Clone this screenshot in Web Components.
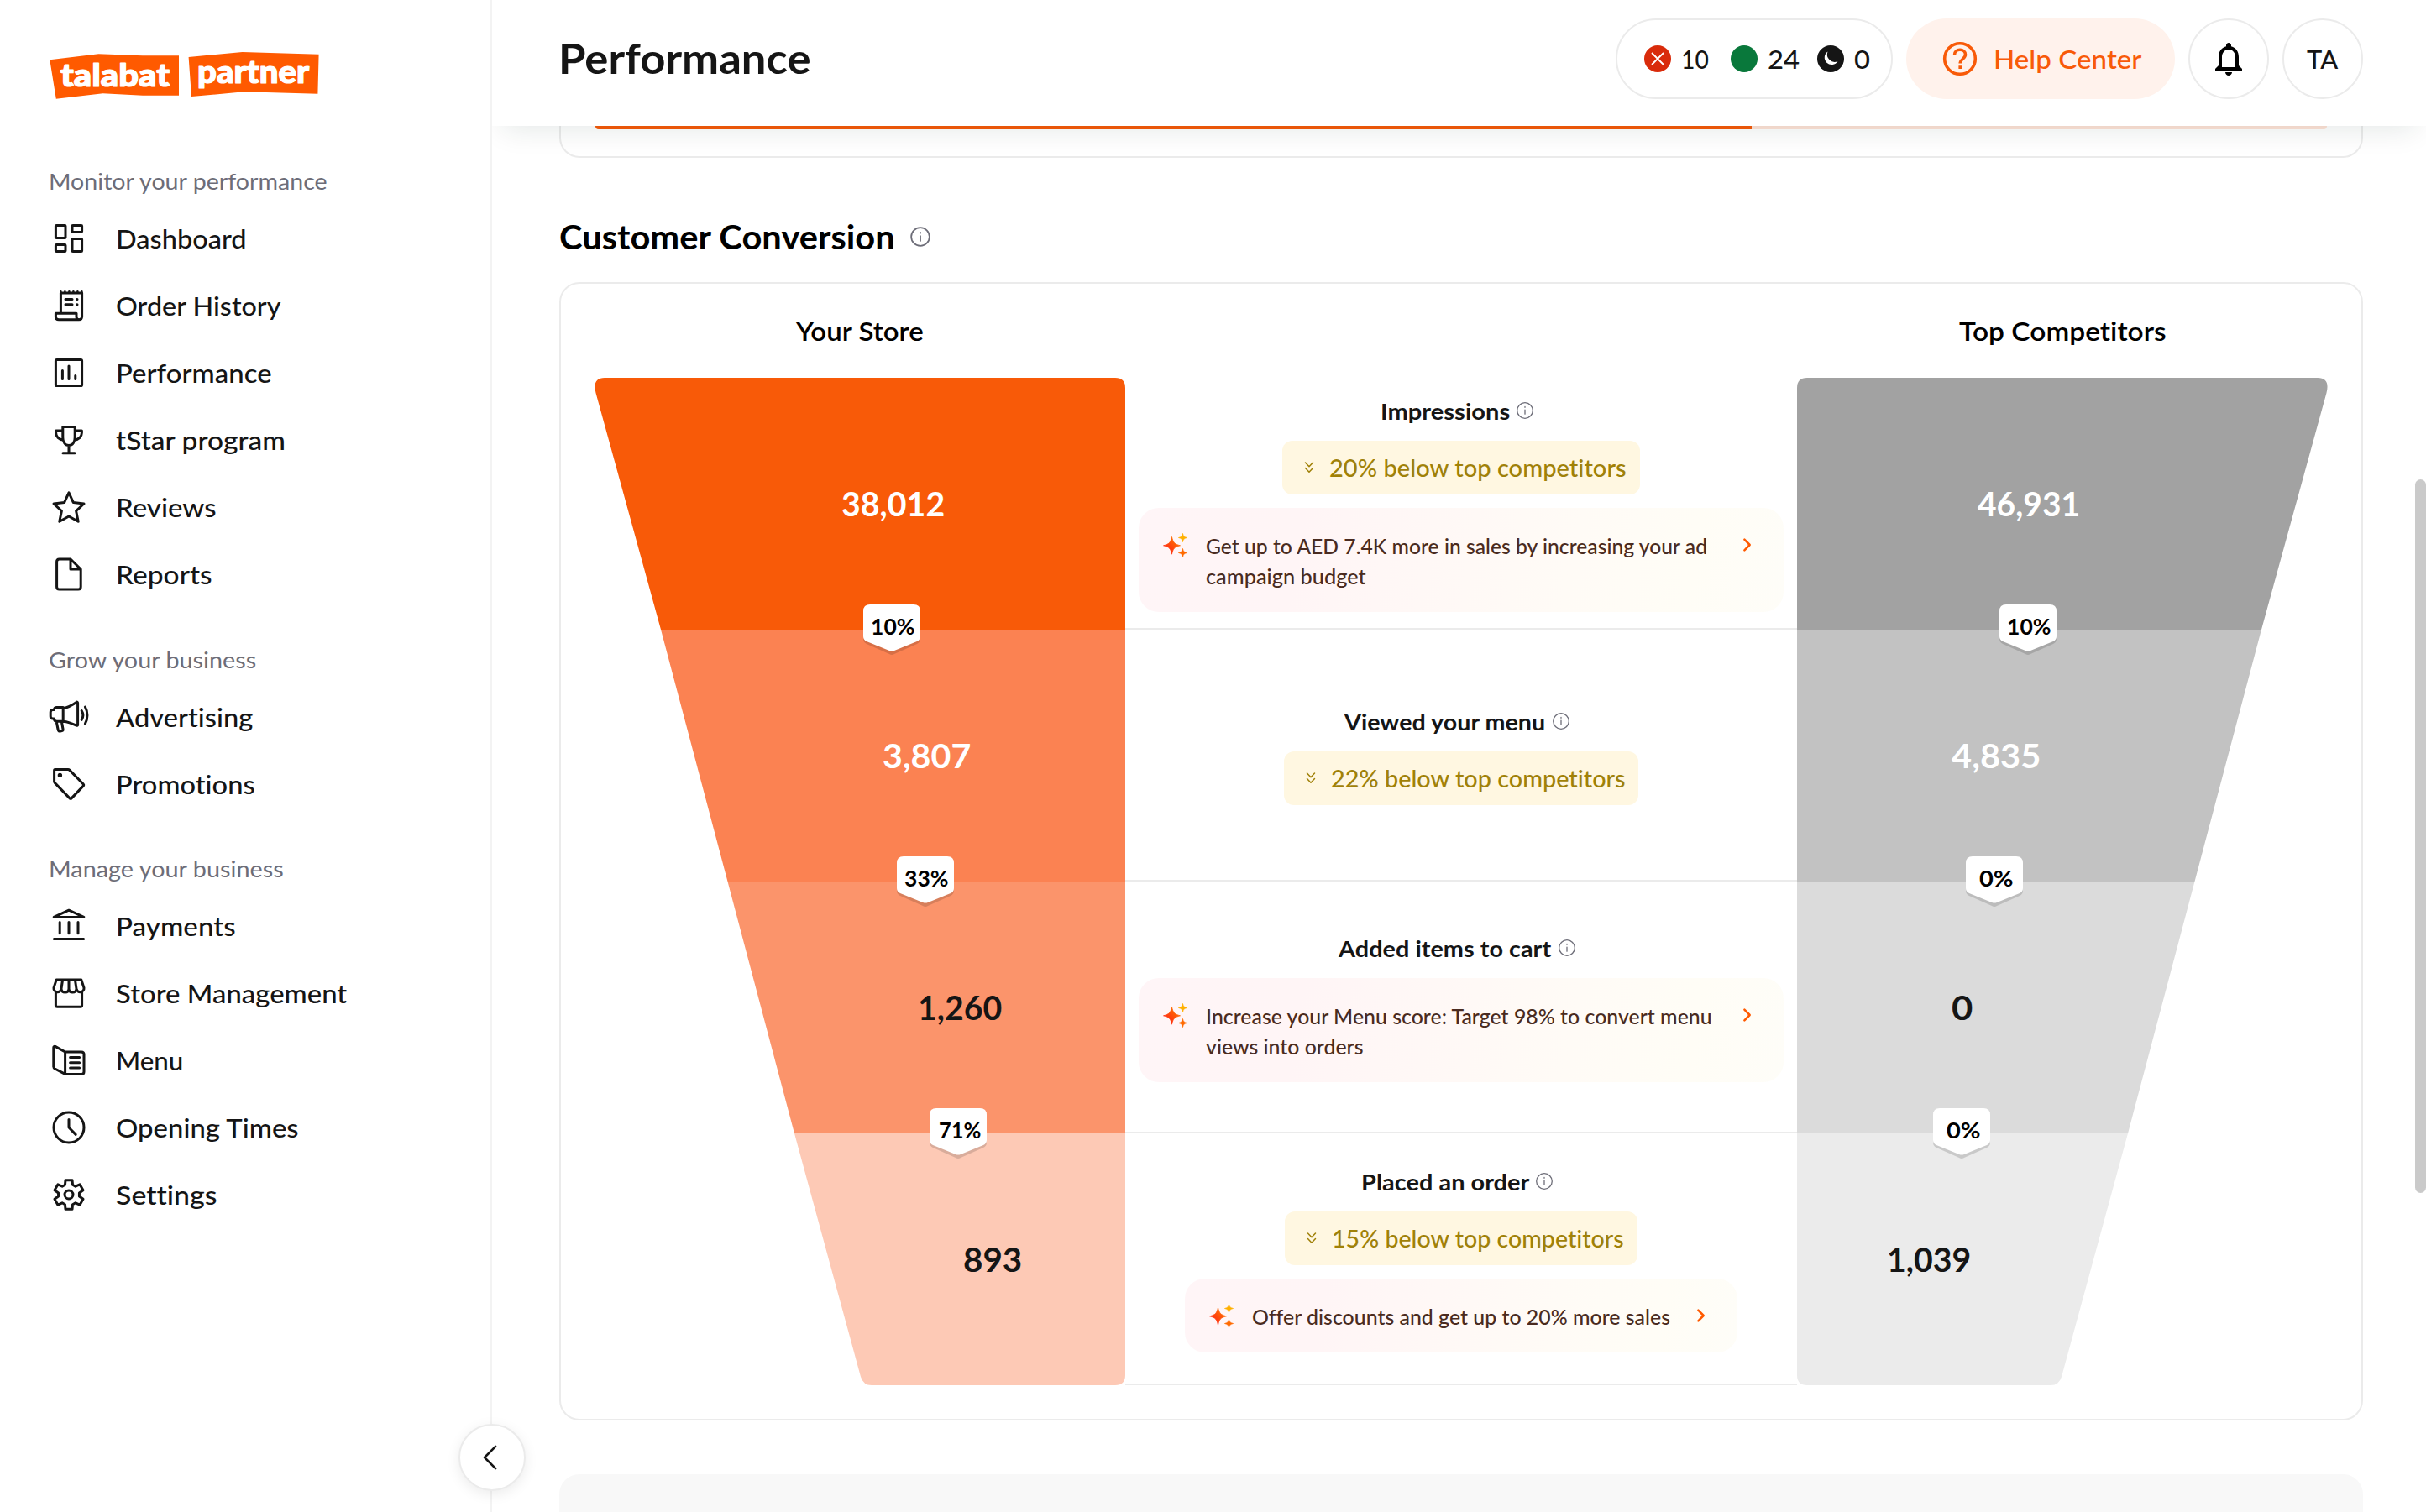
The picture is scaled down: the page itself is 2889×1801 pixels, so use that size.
<!DOCTYPE html>
<html lang="en">
<head>
<meta charset="utf-8">
<title>Performance</title>
<style>
  body {
    margin: 0;
    width: 2889px;
    height: 1801px;
    overflow: hidden;
    background: #fff;
    color: #151515;
    font-family: Lato, "Open Sans", sans-serif;
  }
</style>
</head>
<body>
<partner-app></partner-app>

<script>
const gear = () => {
  const pts = [];
  for (let i = 0; i < 6; i++) {
    [[-21, 6.3], [-13, 8.9], [13, 8.9], [21, 6.3]].forEach(([off, r]) => {
      const a = (i * 60 - 90 + off) * Math.PI / 180;
      pts.push((12 + r * Math.cos(a)).toFixed(2) + ' ' + (12 + r * Math.sin(a)).toFixed(2));
    });
  }
  return `<path d="M${pts.join('L')}Z"/><circle cx="12" cy="12" r="2.5"/>`;
};

const icons = {
  dashboard: '<rect x="4.2" y="4.2" width="5.8" height="7.6" rx=".4"/><rect x="14" y="4.2" width="5.8" height="4" rx=".4"/><rect x="4.2" y="15.8" width="5.8" height="4" rx=".4"/><rect x="14" y="12.2" width="5.8" height="7.6" rx=".4"/>',
  receipt: '<path d="M7.2 16.6V4.500H19.800v13.900c0 1.300-.7 2-1.800 2H6c-1.200 0-1.800-.8-1.800-1.800v-2h12.300v2c0 1.200.6 1.800 1.600 1.800"/><path d="M7.200 4V3.700M9.700 4V3.700M12.200 4V3.700M14.700 4V3.700M17.200 4V3.700M19.700 4V3.700" stroke-width="1.300"/><path d="M10 8.200h4M10 11.400h4M16.800 8.200h.2M16.800 11.400h.2"/>',
  chart: '<rect x="4.200" y="4.200" width="15.600" height="15.600" rx=".7"/><path d="M8.200 10.800v5M12 8v7.800M15.900 13.800v2"/>',
  trophy: '<path d="M8.400 4.300h7.200v6.200c0 2.800-1.400 4.700-3.600 4.700s-3.600-1.900-3.600-4.700zM8.400 6.500H4.300v1.300c0 2.300 1.800 4 4.300 4.200M15.600 6.500h4.100v1.300c0 2.300-1.800 4-4.300 4.200M12 15.200v4.700M8.500 19.900h7"/>',
  star: '<path d="M12 3.400l2.700 5.900 6.300.7-4.700 4.300 1.300 6.300L12 17.500l-5.600 3.100 1.300-6.300L3 10l6.300-.7z"/>',
  file: '<path d="M13 3H6.300c-1 0-1.500.6-1.500 1.500v15c0 .9.5 1.500 1.500 1.500h11.300c1 0 1.500-.6 1.500-1.500V9zM13 3v6h6.100"/>',
  megaphone: '<path d="M8.600 6.400v8.200H4.800c-1 0-1.600-.7-1.600-1.600H2.500c-.8 0-1.400-.6-1.400-1.400V9.200c0-.8.6-1.400 1.400-1.400h.7c0-1 .6-1.600 1.600-1.600h3.800M8.600 6.900c3-.7 5.300-1.900 7.900-3.700.4-.3.800 0 .8.400v13c0 .5-.4.700-.8.500-2.600-1.300-4.900-2.200-7.900-2.500M4.600 14.700l1 5c.1.700.7.900 1.300.8l1-.2c.5-.1.700-.6.600-1.100l-.8-4.500M19.600 8.300c1 1.600 1 3.800 0 5.400M21.700 6c1.700 2.900 1.700 7.100 0 10"/>',
  tag: '<path d="M3.800 3.300h7.700c.4 0 .7.100 1 .4l8 8.200c.4.400.4.900 0 1.300l-6.800 7.100c-.4.400-.9.400-1.300 0l-8.700-9c-.3-.3-.4-.6-.4-.9V3.800c0-.3.200-.5.500-.5z"/><circle cx="6.700" cy="6.700" r=".6" fill="currentColor"/>',
  bank: '<path d="M12 2.600l8.900 4.100H3.100zM6.600 9.800v6.600M12 9.800v6.600M17.500 9.800v6.600M3.200 19.800h17.600"/>',
  store: '<path d="M4.600 4h14.800l1.600 4.800c.3 3-4 3.500-4.500.6-.3 2.800-4.300 2.800-4.500 0-.2 2.800-4.200 2.800-4.500 0-.5 2.900-4.800 2.400-4.500-.6zM8.300 4l-.8 5.400M12 4v5.400M15.700 4l.8 5.400M4.200 11.200v8c0 .5.300.9.900.9h13.800c.6 0 .9-.4.9-.9v-8"/>',
  menu: '<path d="M9.800 7v13.200L3.700 17c-.5-.3-.8-.7-.8-1.200V4.400c0-.7.500-.9 1-.7L9.800 7h9.700c.9 0 1.500.6 1.500 1.500v10.200c0 .9-.6 1.500-1.500 1.500H9.800M12.800 10.300h5.500M12.800 13.400h5.500M12.800 16.500h5.500"/>',
  clock: '<circle cx="12" cy="12" r="9"/><path d="M12 7.300V12l4.100 4.200"/>',
  gear: gear(),
  back: '<path d="M15.500 4.500L8 12l7.500 7.500"/>',
  next: '<path d="M9.300 7.200l4.700 4.800-4.700 4.800"/>',
  info: '<circle cx="12" cy="12" r="9.300"/><path d="M12 11.200v5M12 7.500v.8"/>',
  down: '<path d="M7.500 6l4.500 4.800L16.500 6M7.500 12.500l4.500 4.800 4.500-4.800"/>'
};

// icon drawn on a 24 unit grid
class UiIcon extends HTMLElement {
  connectedCallback() {
    const size = this.getAttribute('size') || 48;
    const stroke = this.getAttribute('stroke') || 1.5;
    this.attachShadow({ mode: 'open' }).innerHTML = `
      <style>
        :host { display: block; flex: none; width: ${size}px; height: ${size}px; }
        svg { display: block; width: 100%; height: 100%; }
      </style>
      <svg viewBox="0 0 24 24" fill="none" stroke="currentColor" stroke-width="${stroke}"
        stroke-linecap="round" stroke-linejoin="round">${icons[this.getAttribute('name')]}</svg>`;
  }
}
customElements.define('ui-icon', UiIcon);

// single line of text, widened to a given ink width
// the tiny letter spacing keeps "ti" and "tt" from joining up
const ruler = document.createElement('canvas').getContext('2d');
class FitText extends HTMLElement {
  connectedCallback() {
    const cs = getComputedStyle(this);
    ruler.font = `${cs.fontWeight} ${cs.fontSize} ${cs.fontFamily}`;
    ruler.letterSpacing = '0.02px';
    const m = ruler.measureText(this.textContent);
    const ratio = this.getAttribute('w') / (m.actualBoundingBoxLeft + m.actualBoundingBoxRight);
    this.attachShadow({ mode: 'open' }).innerHTML = `
      <style>
        :host { display: inline-block; vertical-align: top; white-space: nowrap; letter-spacing: .02px; font-variant-ligatures: none; width: ${m.width * ratio}px; }
        span { display: inline-block; vertical-align: top; transform-origin: 0 50%; transform: translateY(-.012em) scaleX(${ratio}); }
      </style><span><slot></slot></span>`;
  }
}
customElements.define('fit-text', FitText);

class PartnerLogo extends HTMLElement {
  connectedCallback() {
    this.attachShadow({ mode: 'open' }).innerHTML = `
      <style>
        :host { display: block; width: 322px; height: 58px; }
        svg { display: block; }
        text { font: 900 37px Lato, sans-serif; fill: #fff; stroke: #fff; stroke-width: 1.2; stroke-linejoin: round; }
      </style>
      <svg width="322" height="58" viewBox="0 0 322 58">
        <path fill="#ff5a00" d="M.3 11.300L58.400 4.300 111 6.300H154V53.700H111L63.600 51.300 7.800 57.700ZM165.600 8L229.600 2 320.600 4.700 319.400 51.700 231.600 49.300 169 55Z"/>
        <text x="13" y="42.600" textLength="130" lengthAdjust="spacingAndGlyphs">talabat</text>
        <text x="176" y="39.300" textLength="133" lengthAdjust="spacingAndGlyphs">partner</text>
      </svg>`;
  }
}
customElements.define('partner-logo', PartnerLogo);

const nav = [
  ['Monitor your performance', 331, [
    ['dashboard', 'Dashboard', 152], ['receipt', 'Order History', 196], ['chart', 'Performance', 183],
    ['trophy', 'tStar program', 201], ['star', 'Reviews', 117], ['file', 'Reports', 112]]],
  ['Grow your business', 247, [
    ['megaphone', 'Advertising', 163], ['tag', 'Promotions', 163]]],
  ['Manage your business', 278, [
    ['bank', 'Payments', 140], ['store', 'Store Management', 275], ['menu', 'Menu', 77],
    ['clock', 'Opening Times', 217], ['gear', 'Settings', 120]]]
];

class SideNav extends HTMLElement {
  connectedCallback() {
    this.attachShadow({ mode: 'open' }).innerHTML = `
      <style>
        :host { display: block; position: relative; z-index: 3; box-sizing: border-box; height: 1801px; padding: 60px 0 0 59px; border-right: 2px solid #f3f3f3; background: #fff; }
        partner-logo { margin-bottom: 78px; }
        section { margin-bottom: 41px; }
        h3 { margin: 0 0 8px -1px; font-size: 27.500px; line-height: 40px; font-weight: 400; color: #6d6d78; }
        section + section h3 { margin-bottom: 9px; }
        section:first-of-type { margin-bottom: 42px; }
        section:nth-of-type(2) { margin-bottom: 41px; }
        section:nth-of-type(n+2) a:first-of-type { margin-top: -1px; }
        a { display: flex; align-items: center; height: 80px; gap: 32px; font-size: 31px; font-weight: 500; margin-left: -1px; }
        button { position: absolute; left: 546px; top: 1696px; width: 80px; height: 80px; box-sizing: border-box; padding: 0 4px 0 0; display: flex; align-items: center; justify-content: center; border: 2px solid #ebebeb; border-radius: 50%; background: #fff; color: #151515; box-shadow: 0 4px 16px rgba(0,0,0,.08); }
      </style>
      <partner-logo></partner-logo>
      ${nav.map(([title, w, items]) => `
        <section>
          <h3><fit-text w="${w}">${title}</fit-text></h3>
          ${items.map(([icon, label, lw]) => `<a><ui-icon name="${icon}"></ui-icon><fit-text w="${lw}">${label}</fit-text></a>`).join('')}
        </section>`).join('')}
      <button><ui-icon name="back" size="42"></ui-icon></button>`;
  }
}
customElements.define('side-nav', SideNav);

class TopBar extends HTMLElement {
  connectedCallback() {
    this.attachShadow({ mode: 'open' }).innerHTML = `
      <style>
        :host { position: relative; z-index: 2; display: flex; justify-content: space-between; box-sizing: border-box; height: 150px; padding: 22px 75px 0 79px; background: #fff; box-shadow: 0 16px 32px -12px rgba(10,50,40,.11); }
        h1 { margin: 0; font-size: 49px; line-height: 96px; font-weight: 700; }
        .actions { display: flex; gap: 16px; height: 96px; font-size: 31px; font-weight: 500; }
        .actions > div { display: flex; align-items: center; box-sizing: border-box; height: 96px; border: 2px solid #ebebeb; border-radius: 48px; }
        .status { width: 330px; padding-left: 32px; }
        .status svg { flex: none; margin-right: 12px; }
        .n10 { width: 59px; } .n24 { width: 59px; }
        .actions .help { width: 320px; padding-left: 40px; gap: 16px; border: 0; background: #fff2ec; color: #f85a08; }
        .round { width: 96px; justify-content: center; }
      </style>
      <h1><fit-text w="296">Performance</fit-text></h1>
      <div class="actions">
        <div class="status">
          <svg width="32" height="32"><circle cx="16" cy="16" r="16" fill="#d92b0b"/><path d="M9 9l14 14M23 9L9 23" stroke="#fff" stroke-width="1.800"/></svg>
          <span class="n10"><fit-text w="31">10</fit-text></span>
          <svg width="32" height="32"><circle cx="16" cy="16" r="16" fill="#09783b"/></svg>
          <span class="n24"><fit-text w="37">24</fit-text></span>
          <svg width="32" height="32"><circle cx="16" cy="16" r="16" fill="#151515"/><path d="M12.500 7.500a8.500 8.500 0 1 0 12 11.500A9 9 0 0 1 12.500 7.500z" fill="#fff"/></svg>
          <fit-text w="19">0</fit-text>
        </div>
        <div class="help">
          <svg width="48" height="48" viewBox="0 0 48 48" fill="none" stroke="currentColor" stroke-width="3.600"><circle cx="24" cy="24" r="18.300"/><path d="M17.500 19.500c0-4 2.900-6.200 6.500-6.200s6.500 2.300 6.500 5.700c0 5-6.300 5.500-6.300 10.500M24.200 32.300v3.700"/></svg>
          <fit-text w="175">Help Center</fit-text>
        </div>
        <div class="round">
          <svg width="48" height="48" viewBox="0 0 24 24"><path d="M12 22c1.100 0 2-.9 2-2h-4c0 1.100.9 2 2 2zm6-6v-5c0-3.070-1.630-5.640-4.500-6.320V4c0-.83-.67-1.500-1.500-1.500s-1.500.67-1.500 1.500v.68C7.640 5.360 6 7.920 6 11v5l-2 2v1h16v-1l-2-2zm-2 1H8v-6c0-2.480 1.510-4.500 4-4.500s4 2.020 4 4.500v6z"/></svg>
        </div>
        <div class="round"><fit-text w="38">TA</fit-text></div>
      </div>`;
  }
}
customElements.define('top-bar', TopBar);

// four stacked bands clipped to a rounded, slanted outline
const bandDrop = 79.25;
class FunnelChart extends HTMLElement {
  connectedCallback() {
    const flip = this.getAttribute('side') === 'right';
    const id = flip ? 'r' : 'l';
    const colors = this.getAttribute('colors').split(' ');
    const rows = JSON.parse(this.getAttribute('rows'));
    this.attachShadow({ mode: 'open' }).innerHTML = `
      <style>
        :host { display: block; position: relative; width: 632px; height: 1200px; }
        .shape { position: absolute; inset: 0; }
        .band { position: relative; box-sizing: border-box; height: 300px; }
        .mid { position: relative; height: 100%; display: flex; align-items: center; justify-content: center; font-size: 40px; font-weight: 700; color: #fff; }
        .dark { color: #151515; }
        .badge { position: absolute; z-index: 1; left: calc(50% - 35.500px); bottom: -30px; width: 68px; height: 60px; }
        .badge svg { position: absolute; left: 0; top: 0; }
        .badge span { position: relative; display: block; width: 71px; line-height: 52px; text-align: center; font-size: 27.500px; color: #000; }
      </style>
      <svg class="shape" width="632" height="1200">
        <clipPath id="${id}"><path d="M12 0H620Q632 0 632 12V1188Q632 1200 620 1200H330Q320 1200 317 1190L238 900 79 300 1.500 18Q-3 0 12 0Z"/></clipPath>
        <g ${flip ? 'transform="translate(632 0) scale(-1 1)"' : ''}><g clip-path="url(#${id})">
          ${colors.map((c, i) => `<rect y="${i * 300}" width="632" height="300" fill="${c}"/>`).join('')}
        </g></g>
      </svg>
      ${rows.map(([value, w, pct, pw], i) => `
        <div class="band" style="padding-${flip ? 'right' : 'left'}: ${bandDrop * (i + 1)}px">
          <div class="mid ${i > 1 ? 'dark' : ''}">
            <fit-text w="${w}">${value}</fit-text>
            ${pct ? `<div class="badge">
              <svg width="68" height="62">
                <path d="M0 10Q0 0 10 0H58Q68 0 68 10V40Q68 44 64 46L37 58Q34 60 31 58L4 46Q0 44 0 40Z" transform="translate(0 1)" fill="#000" fill-opacity=".14"/>
                <path d="M0 8Q0 0 8 0H60Q68 0 68 8V38Q68 42 64 44L37 55Q34 56 31 55L4 44Q0 42 0 38Z" fill="#fff"/>
              </svg>
              <span><fit-text w="${pw}">${pct}</fit-text></span>
            </div>` : ''}
          </div>
        </div>`).join('')}`;
  }
}
customElements.define('funnel-chart', FunnelChart);

class CompareChip extends HTMLElement {
  connectedCallback() {
    this.attachShadow({ mode: 'open' }).innerHTML = `
      <style>
        :host { display: flex; align-items: center; box-sizing: border-box; height: 64px; padding: 0 15px 0 20px; gap: 12px; border-radius: 12px; background: #fff7e1; color: #a08108; font-size: 28px; font-weight: 500; }
      </style>
      <ui-icon name="down" size="24" stroke="1.500"></ui-icon><slot></slot>`;
  }
}
customElements.define('compare-chip', CompareChip);

class TipCard extends HTMLElement {
  connectedCallback() {
    this.attachShadow({ mode: 'open' }).innerHTML = `
      <style>
        :host { display: flex; box-sizing: border-box; padding: 28px 27px 24px 28px; gap: 20px; border-radius: 24px; background: linear-gradient(100deg, #fff5f7 0%, #fff5f6 25%, #fffaf6 58%, #fffdf6 85%, #fefdf8 100%); color: #4a2b20; font-size: 24px; line-height: 36px; font-weight: 500; }
        .text { flex: 1; }
        ui-icon { color: #ff5a00; }
        svg { flex: none; margin-top: -4px; }
      </style>
      <svg width="32" height="36" viewBox="0 0 32 36">
        <defs><linearGradient id="spark" x1="0" y1="1" x2="1" y2="0"><stop offset=".2" stop-color="#ff2a12"/><stop offset=".9" stop-color="#ff7a00"/></linearGradient></defs>
        <path fill="url(#spark)" d="M11.500 10.500C13.200 17.500 14.500 19 21.500 20.800 14.500 22.600 13.200 24 11.500 31.200 9.800 24 8.500 22.600 1.500 20.800 8.500 19 9.800 17.500 11.500 10.500Z" stroke="url(#spark)" stroke-width=".8"/>
        <path fill="#ffb000" d="M24.500 6.500C25.300 10 26 10.700 29.500 11.500 26 12.300 25.300 13 24.500 16.500 23.700 13 23 12.300 19.500 11.500 23 10.700 23.700 10 24.500 6.500Z" stroke="#ffb000" stroke-width=".8"/>
        <path fill="#ff6a00" d="M24.500 24.500C25.300 28 26 28.700 29.500 29.500 26 30.300 25.300 31 24.500 34.500 23.700 31 23 30.300 19.500 29.500 23 28.700 23.700 28 24.500 24.500Z" stroke="#ff6a00" stroke-width=".8"/>
      </svg>
      <div class="text"><slot></slot></div>
      <ui-icon name="next" size="32" stroke="1.900"></ui-icon>`;
  }
}
customElements.define('tip-card', TipCard);

class FunnelStep extends HTMLElement {
  connectedCallback() {
    this.attachShadow({ mode: 'open' }).innerHTML = `
      <style>
        :host { display: flex; flex-direction: column; align-items: center; justify-content: center; box-sizing: border-box; height: 300px; gap: 16px; border-bottom: 2px solid #ebebeb; }
        .title { display: flex; align-items: center; gap: 6px; height: 40px; padding-right: 8px; font-size: 27.500px; font-weight: 700; }
        ui-icon { color: #6d6d78; }
        ::slotted(tip-card.wide) { width: 768px; }
      </style>
      <div class="title"><fit-text w="${this.getAttribute('w')}">${this.getAttribute('label')}</fit-text><ui-icon name="info" size="24" stroke="1.300"></ui-icon></div>
      <slot></slot>`;
  }
}
customElements.define('funnel-step', FunnelStep);

class PartnerApp extends HTMLElement {
  connectedCallback() {
    this.attachShadow({ mode: 'open' }).innerHTML = `
      <style>
        :host { position: relative; display: grid; grid-template-columns: 586px 1fr; width: 2889px; height: 1801px; overflow: hidden; }
        .content { display: flex; flex-direction: column; margin: 0 75px 0 80px; }
        .prev { box-sizing: border-box; height: 38px; padding: 0 41px; border: 2px solid #ebebeb; border-top: 0; border-radius: 0 0 24px 24px; }
        .bar { height: 4px; border-radius: 0 0 4px 4px; background: #ffe3d6; overflow: hidden; }
        .bar div { width: 1377px; height: 4px; background: #f85a08; }
        h2 { display: flex; align-items: center; gap: 15px; margin: 70px 0 30px; height: 48px; font-size: 40px; font-weight: 700; color: #000; }
        h2 ui-icon { color: #6d6d78; }
        .card { display: grid; grid-template-columns: 632px 800px 632px; grid-template-rows: 112px 1200px; box-sizing: border-box; height: 1356px; padding: 0 40px; border: 2px solid #ebebeb; border-radius: 24px; }
        .col { display: flex; justify-content: center; padding-top: 37px; font-size: 31px; line-height: 38px; font-weight: 600; color: #000; }
        .next { flex: none; margin-top: 64px; height: 60px; border-radius: 24px 24px 0 0; background: #f8f8f8; }
        .scroll { position: absolute; right: 0; top: 571px; width: 13px; height: 850px; border-radius: 7px; background: #cacaca; }
      </style>
      <side-nav></side-nav>
      <main>
        <top-bar></top-bar>
        <div class="content">
          <div class="prev"><div class="bar"><div></div></div></div>
          <h2><fit-text w="398">Customer Conversion</fit-text><ui-icon name="info" size="28" stroke="1.500"></ui-icon></h2>
          <div class="card">
            <div class="col"><fit-text w="153">Your Store</fit-text></div>
            <div></div>
            <div class="col"><fit-text w="246">Top Competitors</fit-text></div>
            <funnel-chart side="left" colors="#f85a08 #fb8252 #fb946b #fdc9b5"
              rows='[["38,012",121,"10%",51],["3,807",103,"33%",52],["1,260",98,"71%",49],["893",68]]'></funnel-chart>
            <div>
              <funnel-step label="Impressions" w="152">
                <compare-chip><fit-text w="353">20% below top competitors</fit-text></compare-chip>
                <tip-card class="wide"><fit-text w="597">Get up to AED 7.4K more in sales by increasing your ad</fit-text><br><fit-text w="191">campaign budget</fit-text></tip-card>
              </funnel-step>
              <funnel-step label="Viewed your menu" w="240">
                <compare-chip><fit-text w="350">22% below top competitors</fit-text></compare-chip>
              </funnel-step>
              <funnel-step label="Added items to cart" w="255">
                <tip-card class="wide"><fit-text w="601">Increase your Menu score: Target 98% to convert menu</fit-text><br><fit-text w="187">views into orders</fit-text></tip-card>
              </funnel-step>
              <funnel-step label="Placed an order" w="199">
                <compare-chip><fit-text w="346">15% below top competitors</fit-text></compare-chip>
                <tip-card><fit-text w="497">Offer discounts and get up to 20% more sales</fit-text></tip-card>
              </funnel-step>
            </div>
            <funnel-chart side="right" colors="#a2a2a2 #c2c2c2 #dbdbdb #ebebeb"
              rows='[["46,931",120,"10%",51],["4,835",104,"0%",40],["0",24,"0%",40],["1,039",97]]'></funnel-chart>
          </div>
          <div class="next"></div>
        </div>
      </main>
      <div class="scroll"></div>`;
  }
}
customElements.define('partner-app', PartnerApp);
</script>
</body>
</html>
